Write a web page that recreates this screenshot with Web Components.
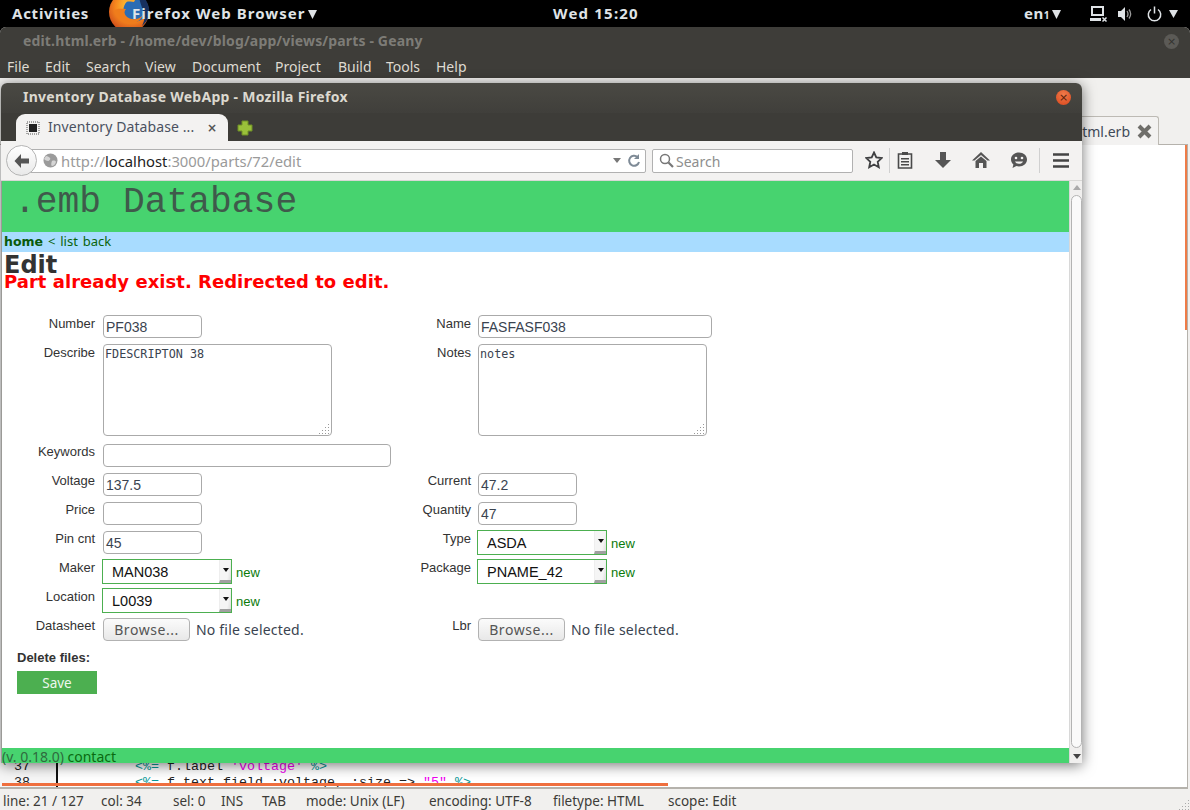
<!DOCTYPE html>
<html><head><meta charset="utf-8"><style>
html,body{margin:0;padding:0;width:1190px;height:810px;overflow:hidden;background:#000}
x-desktop{display:block;width:1190px;height:810px}
</style></head><body>
<x-desktop></x-desktop>
<script>
const UB='"Noto Sans","Open Sans",sans-serif';
function def(name,css,html){customElements.define(name,class extends HTMLElement{constructor(){super();const r=this.attachShadow({mode:'open'});r.innerHTML='<style>'+css+'</style>'+html;}})}

def('x-topbar',`
:host{display:flex;align-items:center;height:25px;padding-bottom:2px;background:#000;color:#dfe3e6;font:700 15px ${UB};position:relative;overflow:hidden}
.a{margin-left:12px;width:97px;letter-spacing:.75px}
.fx{position:absolute;left:108px;top:-9px}
.b{position:relative;width:440px;letter-spacing:1.05px;margin-left:23px;white-space:nowrap}
.t{position:absolute;left:553px;letter-spacing:1.2px}
.r{position:absolute;left:1024px;top:0;height:25px;display:flex;align-items:center;letter-spacing:.5px}
.abs{position:absolute}
small{font-size:10px}
`,`
<span class="a">Activities</span>
<svg class="fx" width="42" height="42" viewBox="0 0 42 42"><defs><radialGradient id="g" cx=".55" cy=".35" r=".7"><stop offset="0" stop-color="#ffd23c"/><stop offset=".55" stop-color="#f7881e"/><stop offset="1" stop-color="#c9451a"/></radialGradient></defs><circle cx="21" cy="21" r="20" fill="url(#g)"/><circle cx="27" cy="19" r="11.5" fill="#2a6cb4"/><path d="M30 2c6 3 10 9 11 15 1 8-2 14-7 18 3-6 3-11 1-15-1-4-3-8-5-18z" fill="#17305e"/><path d="M14 10c5-5 12-6 18-3-4 0-5 2-6 4-5-1-9 0-12-1z" fill="#f9a92c"/><path d="M6 20c3 10 12 15 20 12 4-1 7-4 9-8-4 5-12 6-17 1-2-2-2-5 0-7-5 0-9-1-12 2z" fill="#ef7d1c"/></svg>
<span class="b">Firefox Web Browser<svg width="11" height="9" viewBox="0 0 11 9" fill="#dfe3e6" style="margin-left:1px"><path d="M1 0h9L5.500 9z"/></svg></span>
<span class="t">Wed 15:20</span>
<div class="r"><span>en<small>1</small><svg width="11" height="9" viewBox="0 0 11 9" fill="#dfe3e6" style="margin-left:1px"><path d="M1 0h9L5.500 9z"/></svg></span></div>
<svg class="abs" style="left:1089px;top:5px" width="19" height="18" viewBox="0 0 19 18" fill="#dfe3e6"><path d="M2 1h13v10H2zM4 3v6h9V3z" fill-rule="evenodd"/><path d="M1 13h11v3H1z"/><path d="M13.500 12.500l4 4M17.500 12.500l-4 4" stroke="#dfe3e6" stroke-width="1.500"/></svg>
<svg class="abs" style="left:1117px;top:6px" width="16" height="16" viewBox="0 0 16 16" fill="#dfe3e6"><path d="M1 5h3l4-4v14l-4-4H1z"/><path d="M10 5c1.200 1.800 1.200 4.200 0 6M12 3.500c2 2.700 2 6.300 0 9" fill="none" stroke="#999" stroke-width="1.300"/></svg>
<svg class="abs" style="left:1146px;top:5px" width="17" height="18" viewBox="0 0 17 18" fill="none" stroke="#dfe3e6" stroke-width="1.500"><path d="M5 4.500a6.200 6.200 0 1 0 7 0M8.500 1.500v7"/></svg>
<svg class="abs" style="left:1168px;top:10px" width="11" height="8" viewBox="0 0 11 8" fill="#dfe3e6"><path d="M1 0h9L5.500 8z"/></svg>
`);

def('x-geany',`
:host{display:flex;flex-direction:column;position:absolute;left:0;top:27px;width:1190px;height:783px;background:#f1f0ee;border-radius:6px 6px 0 0;overflow:hidden}
.head{height:51px;background:#3e3d39;flex:none;position:relative;color:#7f7e79}
.title{position:absolute;left:23px;top:4px;font:700 14px ${UB};letter-spacing:.15px;color:#7d7c77}
.close{position:absolute;left:1164px;top:7px;width:15px;height:15px;border-radius:50%;background:#5b5a56;color:#33322f;font:11px/15px "DejaVu Sans";text-align:center}
.menu{position:absolute;left:0;top:29px;height:22px;width:100%;color:#dfdbd2;font:14px ${UB}}
.menu span{position:absolute;top:1px}
.main{flex:1;position:relative;display:flex;flex-direction:column;min-height:0}
.tabrow{height:67px;flex:none;position:relative;border-bottom:1px solid #b5b2ac;margin-right:2px;box-sizing:border-box}
.tab{position:absolute;left:1060px;top:38px;width:99px;height:29px;background:#f3f2f1;border:1px solid #bdbab4;border-bottom:0;border-radius:3px 3px 0 0;box-sizing:border-box;font:14px ${UB};color:#3f4a58;display:flex;align-items:center;justify-content:flex-end;gap:6px;padding-right:5px}
.ed{flex:1;background:#fff;position:relative;margin-right:2px;border-right:1px solid #b5b2ac;border-bottom:2px solid #b5b2ac;overflow:hidden}
.vbar{position:absolute;left:1185px;top:0;width:3px;height:185px;background:#ef7c48}
.code{position:absolute;left:0;top:614px;width:100%;height:28px;font:13.330px/16px "Liberation Mono",monospace}
.gut{position:absolute;left:0;top:0;width:56px;height:28px;background:#f6f6f6;border-right:2px solid #111;color:#222;text-align:right}
.gut div{padding-right:26px}
.ln{position:absolute;left:135px;white-space:pre;color:#222}
.hbar{position:absolute;left:2px;top:638px;width:666px;height:3px;background:#ef6f3e}
.status{height:21px;flex:none;background:#f1f0ee;font:13.500px/24px ${UB};color:#3c3b37;position:relative}
.status span{position:absolute;top:0;white-space:nowrap}
.status svg{position:absolute;right:0;bottom:0}
`,`
<div class="head"><span class="title">edit.html.erb - /home/dev/blog/app/views/parts - Geany</span><span class="close">×</span>
<div class="menu"><span style="left:7px">File</span><span style="left:45px">Edit</span><span style="left:86px">Search</span><span style="left:145px">View</span><span style="left:192px">Document</span><span style="left:275px">Project</span><span style="left:338px">Build</span><span style="left:386px">Tools</span><span style="left:436px">Help</span></div></div>
<div class="main">
<div class="tabrow"><div class="tab">html.erb<svg width="17" height="17" viewBox="0 0 17 17"><path d="M3 3l11 11M14 3L3 14" stroke="#6f6e6a" stroke-width="4"/></svg></div></div>
<div class="ed"><div class="vbar"></div>
<div class="code"><div class="gut"><div>37</div><div>38</div></div>
<div class="ln" style="top:0"><span style="color:#0a9a9a">&lt;%=</span> f.label <span style="color:#f000f0">'voltage'</span> <span style="color:#0a9a9a">%&gt;</span></div>
<div class="ln" style="top:16px"><span style="color:#0a9a9a">&lt;%=</span> f.text_field :voltage, :size =&gt; <span style="color:#f000f0">"5"</span> <span style="color:#0a9a9a">%&gt;</span></div></div>
<div class="hbar"></div></div>
<div class="status"><span style="left:3px">line: 21 / 127</span><span style="left:101px">col: 34</span><span style="left:173px">sel: 0</span><span style="left:221px">INS</span><span style="left:262px">TAB</span><span style="left:306px">mode: Unix (LF)</span><span style="left:429px">encoding: UTF-8</span><span style="left:553px">filetype: HTML</span><span style="left:668px">scope: Edit</span>
<svg width="11" height="11" viewBox="0 0 11 11" fill="#aaa"><path d="M9 1h1v1H9zM6 4h1v1H6zM9 4h1v1H9zM3 7h1v1H3zM6 7h1v1H6zM9 7h1v1H9zM0 10h1v1H0zM3 10h1v1H3zM6 10h1v1H6zM9 10h1v1H9z"/></svg></div>
</div>
`);

def('x-firefox',`
:host{display:flex;flex-direction:column;position:absolute;left:1px;top:83px;width:1081px;height:680px;border-radius:6px 6px 0 0;box-shadow:0 2px 14px rgba(0,0,0,.55);background:#fff;font-family:"Liberation Sans",sans-serif}
.title{height:30px;background:linear-gradient(#4a4943,#403f3b);border-radius:6px 6px 0 0;color:#dcd9d0;font:700 14px/28px ${UB};padding-left:22px;position:relative;letter-spacing:.27px;flex:none}
.cl{position:absolute;left:1055px;top:7px;width:15px;height:15px;border-radius:50%;background:radial-gradient(circle at 50% 30%,#f07a4a,#d9471c);color:#5a1f0a;font:11px/15px "DejaVu Sans";text-align:center;letter-spacing:0}
.tabs{height:28px;background:#3d3c38;position:relative;flex:none}
.tab{position:absolute;left:15px;top:1px;width:212px;height:27px;background:#f3f2f1;border-radius:9px 9px 0 0;display:flex;align-items:center;box-sizing:border-box;padding-left:10px;font:14px/24px ${UB};color:#4a5160;gap:8px;letter-spacing:.1px}
.tab span{position:relative;top:-1px}
.tab b{font:700 12px "DejaVu Sans";color:#555;position:absolute;left:191px}
.plus{position:absolute;left:235px;top:6px}
.bar{height:40px;background:#f3f2f1;position:relative;flex:none;display:flex;align-items:center;border-bottom:1px solid #d8d7d5;box-sizing:border-box}
.back{position:absolute;left:5px;top:4px;width:31px;height:31px;border:1px solid #b5b5b5;border-radius:50%;background:linear-gradient(#fff,#e9e9e9);box-sizing:border-box;display:flex;align-items:center;justify-content:center}
.url{margin-left:29px;width:616px;height:24px;box-sizing:border-box;border:1px solid #b1b1b1;border-radius:0 2px 2px 0;background:#fff;display:flex;align-items:center;font:14.800px ${UB};color:#9a9a9a;padding-left:12px;gap:2px;position:relative}
.url i{font-style:normal;color:#222}
.url .tx{margin-left:1px}
.url .e{position:absolute;right:4px;top:3px;display:flex;gap:6px;align-items:center}
.search{margin-left:6px;width:201px;height:24px;box-sizing:border-box;border:1px solid #b1b1b1;border-radius:2px;background:#fff;display:flex;align-items:center;font:14px ${UB};color:#8e8e8e;padding-left:6px;gap:2px}
.search span{position:relative;top:1px}
.ic{position:absolute;top:10px}
.sep{position:absolute;top:7px;width:1px;height:25px;background:#d0d0d0}
.content{flex:1;position:relative;display:flex;min-height:0;border-left:1px solid #9b9a97}
.page{flex:1;min-width:0;display:flex;flex-direction:column}
.sb{width:13px;flex:none;background:#f0efee;position:relative;border-left:1px solid #d8d8d8;box-sizing:border-box}
.thumb{position:absolute;left:1px;top:14px;right:0;height:553px;border:1px solid #b3b3b3;border-radius:7px;background:#fafafa;box-sizing:border-box}
.sb svg{position:absolute;left:2px}
`,`
<div class="title">Inventory Database WebApp - Mozilla Firefox<span class="cl">×</span></div>
<div class="tabs"><div class="tab"><svg width="14" height="14" viewBox="0 0 14 14"><rect x="3" y="3" width="8" height="8" fill="#222"/><path d="M1 1h12v12H1z" fill="none" stroke="#555" stroke-dasharray="1 1"/></svg><span>Inventory Database ...</span><b>×</b></div>
<svg class="plus" width="18" height="18" viewBox="0 0 18 18"><path d="M6 2h6v4h4v6h-4v4H6v-4H2V6h4z" fill="#9ac03a" stroke="#6f8f25"/></svg></div>
<div class="bar">
<div class="url"><svg width="15" height="15" viewBox="0 0 15 15"><circle cx="7.500" cy="7.500" r="7" fill="#9b9b9b"/><path d="M3 3c2 0 3 1 4 2s-1 3-2 3-3-1-4-2zM9 8c2-1 4 0 4 1-1 3-3 4-4 4s-1-3 0-5z" fill="#d5d5d5"/></svg><span class="tx">http://<i>localhost</i>:3000/parts/72/edit</span>
<span class="e"><svg width="8" height="5" viewBox="0 0 8 5"><path d="M0 0h8L4 5z" fill="#777"/></svg><svg width="14" height="15" viewBox="0 0 14 15"><path d="M12 9a5 5 0 1 1-1.500-5" fill="none" stroke="#7e8a96" stroke-width="2"/><path d="M12 1v5H7z" fill="#7e8a96"/></svg></span></div>
<div class="search"><svg width="15" height="15" viewBox="0 0 15 15" fill="none" stroke="#777" stroke-width="1.500"><circle cx="6" cy="6" r="4.500"/><path d="M9.500 9.500l4.500 4.500" stroke-width="2.200"/></svg><span>Search</span></div>
<div class="back"><svg width="18" height="18" viewBox="0 0 18 18"><path d="M8 2L1.500 9 8 16v-4.500h8v-5H8z" fill="#555"/></svg></div>
<svg class="ic" style="left:864px" width="18" height="18" viewBox="0 0 18 18"><path d="M9 1.500l2.300 5 5.400.6-4 3.700 1.100 5.400L9 13.500l-4.800 2.700 1.100-5.400-4-3.700 5.400-.6z" fill="none" stroke="#3f4042" stroke-width="1.800"/></svg>
<span class="sep" style="left:888px"></span>
<svg class="ic" style="left:896px" width="16" height="18" viewBox="0 0 16 18"><path d="M1.500 3h13v14h-13z" fill="none" stroke="#4a4a4a" stroke-width="1.600"/><path d="M5 1h6v3H5zM4 7h8v1.600H4zM4 10h8v1.600H4zM4 13h8v1.600H4z" fill="#4a4a4a"/></svg>
<svg class="ic" style="left:933px" width="18" height="18" viewBox="0 0 18 18"><path d="M6 1h6v8h5l-8 8-8-8h5z" fill="#555"/></svg>
<svg class="ic" style="left:971px" width="18" height="18" viewBox="0 0 18 18"><path d="M9 1L0 9.500h2.500L9 4l6.500 5.500H18z" fill="#555"/><path d="M3.500 10L9 5.500l5.500 4.500v7H11v-5H7v5H3.500z" fill="#555"/></svg>
<svg class="ic" style="left:1009px" width="18" height="18" viewBox="0 0 18 18"><path d="M9 1.500c4.500 0 8 3 8 7s-3.500 7-8 7c-1 0-1.800-.1-2.600-.4L2.500 17l.9-3.500C2 12.200 1 10.500 1 8.500c0-4 3.500-7 8-7z" fill="#555"/><circle cx="6" cy="7" r="1.300" fill="#f3f2f1"/><circle cx="12" cy="7" r="1.300" fill="#f3f2f1"/><path d="M5 10.500h8c-.6 1.500-2.200 2.300-4 2.300s-3.400-.8-4-2.300z" fill="#f3f2f1"/></svg>
<span class="sep" style="left:1038px"></span>
<svg class="ic" style="left:1052px;top:12px" width="16" height="15" viewBox="0 0 16 15"><path d="M0 1.500h16M0 7.500h16M0 13.500h16" stroke="#444" stroke-width="2.400"/></svg>
</div>
<div class="content"><div class="page"><slot></slot></div>
<div class="sb"><svg style="top:3px" width="10" height="7" viewBox="0 0 10 7"><path d="M5 1l4 5H1z" fill="#aaa"/></svg><div class="thumb"></div><svg style="bottom:3px" width="10" height="7" viewBox="0 0 10 7"><path d="M1 1h8L5 6z" fill="#444"/></svg></div></div>
`);

def('x-site-head',`
:host{display:block;height:51px;background:#47d36f;color:#3f5a4b;font:36.300px/43px "Liberation Mono",monospace;padding-left:12px;box-sizing:border-box;flex:none}
`,`<slot></slot>`);
def('x-site-nav',`
:host{display:block;height:20px;background:#a8dcff;color:#0b640b;font:13px/19px ${UB};padding-left:2px;box-sizing:border-box;flex:none;word-spacing:1.500px}
b{font:700 12.500px "DejaVu Sans",sans-serif;color:#0a5a0a}
`,`<b>home</b> &lt; list back`);
def('x-site-foot',`
:host{display:block;height:15px;background:#47d36f;color:#2f6a3e;font:14px/18px ${UB};flex:none;white-space:nowrap}
i{font-style:normal;color:#0a6a10}
`,`(v. 0.18.0) <i>contact</i>`);
def('x-main',`
:host{display:block;flex:1;color:#333;font-family:"Liberation Sans",sans-serif;min-height:0;padding-left:2px;overflow:hidden}
h1{margin:0;font:700 24px/27px "DejaVu Sans",sans-serif;color:#333;height:19px}
.err{font:700 18px/22px "DejaVu Sans",sans-serif;color:#f00;height:28px;letter-spacing:.03px}
`,`<h1>Edit</h1><div class="err">Part already exist. Redirected to edit.</div><slot></slot>`);

def('x-form',`
:host{display:grid;grid-template-columns:91px 284px 76px 1fr;column-gap:8px;margin-top:16px;grid-template-rows:23px 92px 25px repeat(6,23px);row-gap:6px;font-size:13px}
div:nth-child(n){column-gap:0}
`,`<slot></slot>`);
def('x-lab',`
:host{display:block;text-align:right;font:13px/15px "Liberation Sans",sans-serif;color:#333;padding-top:1px}
:host([up]){padding-top:0}
`,`<slot></slot>`);
def('x-text',`
:host{display:inline-block;box-sizing:border-box;height:23px;border:1px solid #aaa;border-radius:4px;background:#fff;font:14px/23px "Liberation Sans",sans-serif;color:#3a4350;padding-left:2px;white-space:nowrap;vertical-align:top}
`,`<slot></slot>`);
def('x-area',`
:host{display:block;box-sizing:border-box;height:92px;border:1px solid #aaa;border-radius:4px;background:#fff;font:11.750px/16px "DejaVu Sans Mono",monospace;color:#3a4350;padding:1px;position:relative}
svg{position:absolute;right:1px;bottom:1px}
`,`<slot></slot><svg width="11" height="11" viewBox="0 0 11 11" fill="#999"><path d="M9 1h1v1H9zM6 4h1v1H6zM9 4h1v1H9zM3 7h1v1H3zM6 7h1v1H6zM9 7h1v1H9zM0 10h1v1H0zM3 10h1v1H3zM6 10h1v1H6zM9 10h1v1H9z"/></svg>`);
def('x-sel',`
:host{display:inline-flex;box-sizing:border-box;height:25px;width:130px;border:1px solid #4caf50;background:#fff;font:14.500px/24px "Liberation Sans",sans-serif;color:#111;padding-left:9px;position:relative;margin:-1px 0 0 -1px;vertical-align:top}
.arr{position:absolute;right:0;top:0;bottom:0;width:12px;background:linear-gradient(100deg,#f5f5f5,#f5f5f5 70%,#ddd);border-bottom:3px solid #a0a0a0;border-left:1px solid #eee;box-sizing:border-box}
.arr::after{content:"";position:absolute;left:3px;top:8px;border:3.500px solid transparent;border-top:4px solid #111;border-bottom:0}
`,`<slot></slot><span class="arr"></span>`);
def('x-new',`
:host{font:13px "Liberation Sans",sans-serif;color:#0a7a0a;margin-left:4px;line-height:25px;vertical-align:top}
`,`new`);
def('x-file',`
:host{display:inline-flex;align-items:center;gap:6px;font:14px ${UB};color:#3a4350;white-space:nowrap;height:23px;letter-spacing:.2px}
.b{box-sizing:border-box;width:87px;height:23px;border:1px solid #b2b2b2;border-radius:4px;background:linear-gradient(#fbfbfb,#e8e8e8);color:#555;text-align:center;line-height:21px;letter-spacing:.55px}
`,`<span class="b">Browse...</span><span>No file selected.</span>`);
def('x-save',`
:host{display:block;margin:5px 0 0 13px;width:80px;height:23px;background:#4caf50;color:#eef7ee;font:13.500px/25px ${UB};text-align:center}
`,`Save`);
def('x-del',`
:host{display:block;margin:9px 0 0 13px;font:700 13px/16px "Liberation Sans",sans-serif;color:#333}
`,`Delete files:`);

def('x-desktop',`:host{display:block;position:relative;width:1190px;height:810px;overflow:hidden}
.fr{margin-left:-1px}`,`
<x-topbar></x-topbar><x-geany></x-geany>
<x-firefox>
 <x-site-head>.emb Database</x-site-head>
 <x-site-nav></x-site-nav>
 <x-main>
  <x-form>
   <x-lab>Number</x-lab><div><x-text style="width:99px">PF038</x-text></div><x-lab>Name</x-lab><div class="fr"><x-text style="width:234px">FASFASF038</x-text></div>
   <x-lab>Describe</x-lab><div style="width:229px;height:92px"><x-area>FDESCRIPTON 38</x-area></div><x-lab>Notes</x-lab><div class="fr" style="width:229px;height:92px"><x-area>notes</x-area></div>
   <x-lab style="margin-top:1px">Keywords</x-lab><div style="margin-top:2px"><x-text style="width:288px"></x-text></div><span></span><span></span>
   <x-lab up>Voltage</x-lab><div><x-text style="width:99px">137.5</x-text></div><x-lab up>Current</x-lab><div class="fr"><x-text style="width:99px">47.2</x-text></div>
   <x-lab up>Price</x-lab><div><x-text style="width:99px"></x-text></div><x-lab up>Quantity</x-lab><div class="fr"><x-text style="width:99px">47</x-text></div>
   <x-lab up>Pin cnt</x-lab><div><x-text style="width:99px">45</x-text></div><x-lab up>Type</x-lab><div class="fr"><x-sel>ASDA</x-sel><x-new></x-new></div>
   <x-lab up>Maker</x-lab><div><x-sel>MAN038</x-sel><x-new></x-new></div><x-lab up>Package</x-lab><div class="fr"><x-sel>PNAME_42</x-sel><x-new></x-new></div>
   <x-lab up>Location</x-lab><div><x-sel>L0039</x-sel><x-new></x-new></div><span></span><span></span>
   <x-lab up>Datasheet</x-lab><div><x-file></x-file></div><x-lab up>Lbr</x-lab><div class="fr"><x-file></x-file></div>
  </x-form>
  <x-del></x-del>
  <x-save></x-save>
 </x-main>
 <x-site-foot></x-site-foot>
</x-firefox>`);
</script>
</body></html>
